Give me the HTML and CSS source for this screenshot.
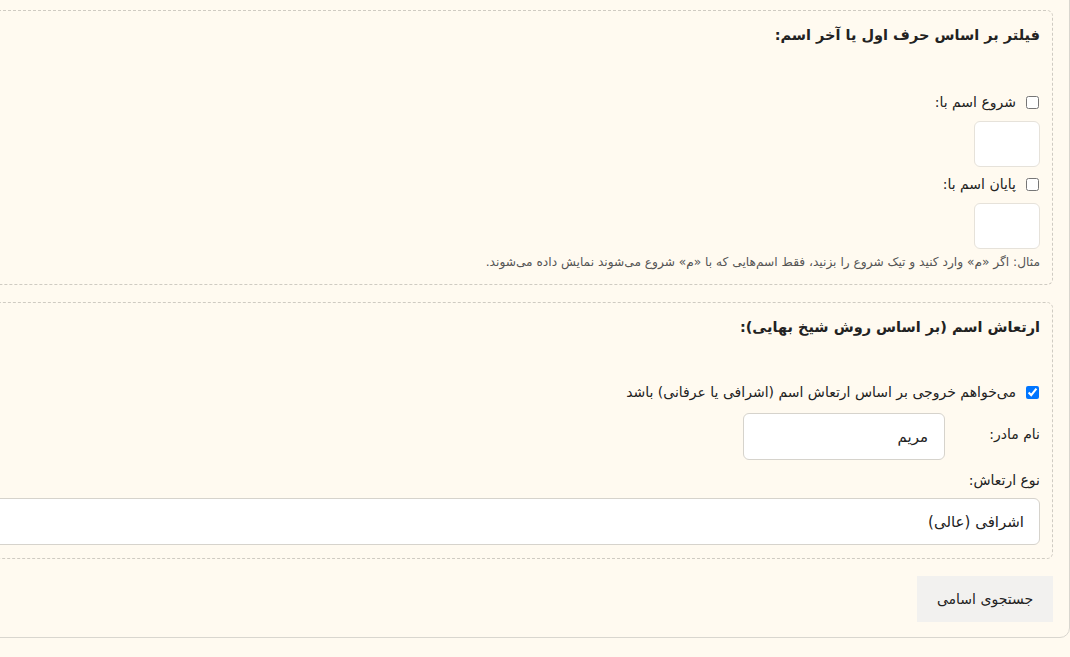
FILE: index.html
```html
<!DOCTYPE html>
<html lang="fa" dir="rtl">
<head>
<meta charset="utf-8">
<title>جستجوی اسامی</title>
<link rel="stylesheet" href="styles.css">
</head>
<body>
<form class="card">
  <fieldset class="group">
    <h3 class="group-title">فیلتر بر اساس حرف اول یا آخر اسم:</h3>
    <label class="check-row"><input type="checkbox"> <span>شروع اسم با:</span></label>
    <input class="letter-input" type="text">
    <label class="check-row"><input type="checkbox"> <span>پایان اسم با:</span></label>
    <input class="letter-input" type="text">
    <p class="hint">مثال: اگر «م» وارد کنید و تیک شروع را بزنید، فقط اسم‌هایی که با «م» شروع می‌شوند نمایش داده می‌شوند.</p>
  </fieldset>

  <fieldset class="group">
    <h3 class="group-title group-title-tight">ارتعاش اسم (بر اساس روش شیخ بهایی):</h3>
    <label class="check-row"><input type="checkbox" checked> <span>می‌خواهم خروجی بر اساس ارتعاش اسم (اشرافی یا عرفانی) باشد</span></label>
    <div class="field-row">
      <label class="field-label">نام مادر:</label>
      <input class="text-input" type="text" value="مریم">
    </div>
    <label class="block-label">نوع ارتعاش:</label>
    <select class="select-input">
      <option>اشرافی (عالی)</option>
      <option>عرفانی</option>
    </select>
  </fieldset>

  <button type="button" class="submit-btn">جستجوی اسامی</button>
</form>
</body>
</html>
```

FILE: styles.css
```css
html, body {
  margin: 0;
  padding: 0;
  overflow: hidden;
}

body {
  background: #fffaf0;
  background-image: linear-gradient(to bottom, rgba(0,0,0,0.05), rgba(0,0,0,0) 4px);
  background-repeat: no-repeat;
  font-family: "DejaVu Sans", "Noto Sans", sans-serif;
  color: #222;
  height: 657px;
}

.card {
  margin: -20px 0 0 -420px;
  padding: 29px 16px 15px 16px;
  border: 1px solid #d9d6cf;
  border-radius: 10px;
  background: #fffaf0;
  display: flex;
  flex-direction: column;
  align-items: flex-start;
}

.group {
  align-self: stretch;
  margin: 0 0 17px 0;
  padding: 12px 12px 13px 12px;
  border: 1px dashed #cfcbc2;
  border-radius: 6px;
  display: flex;
  flex-direction: column;
  align-items: flex-start;
  min-width: 0;
}

.group-title {
  margin: 0 0 45px 0;
  font-size: 14.5px;
  line-height: 24px;
  font-weight: bold;
  color: #222;
}

.group-title-tight {
  margin-bottom: 43px;
}

.check-row {
  display: flex;
  align-items: center;
  gap: 10px;
  font-size: 14px;
  line-height: 20px;
  color: #222;
}

.check-row input {
  margin: 0 1px 0 0;
  width: 13px;
  height: 13px;
}

.letter-input {
  box-sizing: border-box;
  width: 66px;
  height: 46px;
  margin: 9px 0 0 0;
  border: 1px solid #e6e2da;
  border-radius: 6px;
  background: #fff;
}

.letter-input + .check-row {
  margin-top: 7px;
}

.hint {
  margin: 4px 0 0 0;
  font-size: 12.2px;
  line-height: 18px;
  color: #555;
}

.field-row {
  display: flex;
  align-items: center;
  margin-top: 11px;
}

.field-label {
  width: 95px;
  margin-bottom: 5px;
  font-size: 14px;
  line-height: 20px;
}

.text-input {
  box-sizing: border-box;
  width: 202px;
  height: 47px;
  padding: 0 16px;
  border: 1px solid #d6d3cc;
  border-radius: 6px;
  background: #fff;
  font-family: inherit;
  font-size: 15px;
  color: #222;
}

.block-label {
  margin-top: 10px;
  font-size: 14px;
  line-height: 20px;
}

.select-input {
  align-self: stretch;
  box-sizing: border-box;
  height: 47px;
  margin-top: 8px;
  padding: 0 15px;
  border: 1px solid #d6d3cc;
  border-radius: 6px;
  background: #fff;
  font-family: inherit;
  font-size: 15px;
  color: #222;
  appearance: none;
  -webkit-appearance: none;
}

.submit-btn {
  width: 136px;
  height: 46px;
  padding: 0;
  border: none;
  border-radius: 0;
  background: #f2f1ef;
  font-family: inherit;
  font-size: 14px;
  font-weight: normal;
  color: #222;
}
```
